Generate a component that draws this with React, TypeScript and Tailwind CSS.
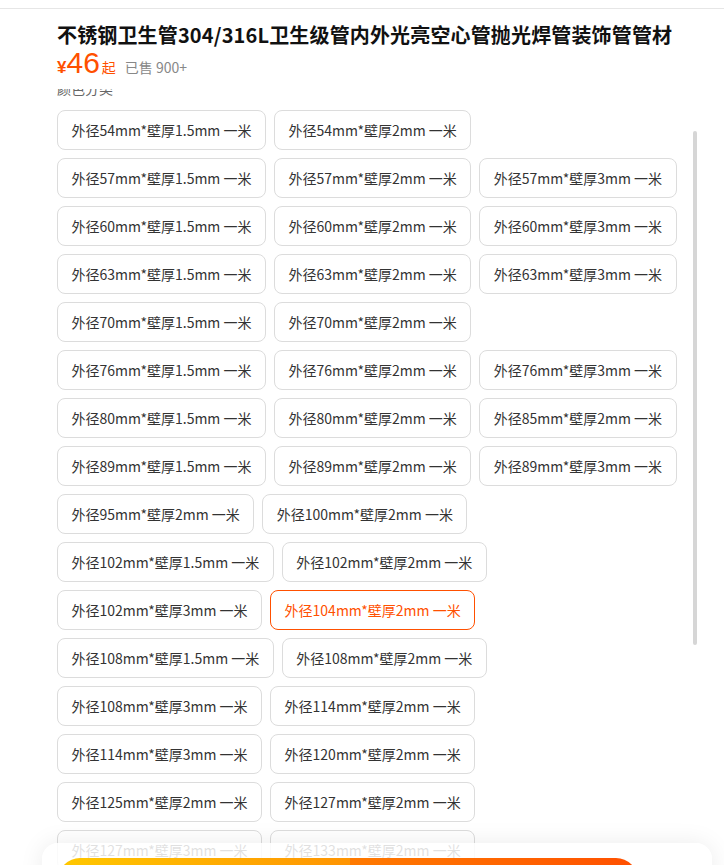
import React from 'react';

const specs: string[][] = [
  ['外径54mm*壁厚1.5mm 一米', '外径54mm*壁厚2mm 一米'],
  ['外径57mm*壁厚1.5mm 一米', '外径57mm*壁厚2mm 一米', '外径57mm*壁厚3mm 一米'],
  ['外径60mm*壁厚1.5mm 一米', '外径60mm*壁厚2mm 一米', '外径60mm*壁厚3mm 一米'],
  ['外径63mm*壁厚1.5mm 一米', '外径63mm*壁厚2mm 一米', '外径63mm*壁厚3mm 一米'],
  ['外径70mm*壁厚1.5mm 一米', '外径70mm*壁厚2mm 一米'],
  ['外径76mm*壁厚1.5mm 一米', '外径76mm*壁厚2mm 一米', '外径76mm*壁厚3mm 一米'],
  ['外径80mm*壁厚1.5mm 一米', '外径80mm*壁厚2mm 一米', '外径85mm*壁厚2mm 一米'],
  ['外径89mm*壁厚1.5mm 一米', '外径89mm*壁厚2mm 一米', '外径89mm*壁厚3mm 一米'],
  ['外径95mm*壁厚2mm 一米', '外径100mm*壁厚2mm 一米'],
  ['外径102mm*壁厚1.5mm 一米', '外径102mm*壁厚2mm 一米'],
  ['外径102mm*壁厚3mm 一米', '外径104mm*壁厚2mm 一米'],
  ['外径108mm*壁厚1.5mm 一米', '外径108mm*壁厚2mm 一米'],
  ['外径108mm*壁厚3mm 一米', '外径114mm*壁厚2mm 一米'],
  ['外径114mm*壁厚3mm 一米', '外径120mm*壁厚2mm 一米'],
  ['外径125mm*壁厚2mm 一米', '外径127mm*壁厚2mm 一米'],
  ['外径127mm*壁厚3mm 一米', '外径133mm*壁厚2mm 一米'],
];

const selected = '外径104mm*壁厚2mm 一米';

const SpecButton: React.FC<{ label: string }> = ({ label }) => {
  const active = label === selected;
  return (
    <button
      className={
        'h-10 rounded-lg border px-[13.5px] text-[14px] leading-5 whitespace-nowrap ' +
        (active ? 'border-[#ff5000] text-[#ff5000]' : 'border-[#dcdcdc] text-[#333]')
      }
    >
      {label}
    </button>
  );
};

const App: React.FC = () => {
  return (
    <div className="relative h-[865px] overflow-hidden bg-white font-['Noto_Sans_CJK_SC',sans-serif]">
      <div className="h-2" />
      <div className="border-t border-[#e6e6e6] pl-[57px] pt-[12px]">
        <h1 className="text-[20px] font-bold leading-[28px] tracking-[0.15px] text-[#111]">
          不锈钢卫生管304/316L卫生级管内外光亮空心管抛光焊管装饰管管材
        </h1>
        <div className="-mt-[1px] flex h-[30px] items-baseline">
          <span className="text-[17px] leading-none font-bold font-['Liberation_Sans',sans-serif] text-[#ff5000]">¥</span>
          <span className="text-[30px] leading-none font-['Liberation_Sans',sans-serif] text-[#ff5000]">46</span>
          <span className="ml-[2px] text-[14px] leading-none text-[#ff5000]">起</span>
          <span className="ml-[9px] text-[14px] leading-none text-[#888]">已售 900+</span>
        </div>
      </div>

      {/* 规格列表（已向下滚动） */}
      <div className="mt-[11px] h-[780px] overflow-hidden pl-[57px]">
        <div className="-mt-[11px] mb-3 text-[14px] leading-5 text-[#666]">颜色分类</div>
        <div className="flex flex-col gap-2">
          {specs.map((row, i) => (
            <div key={i} className="flex gap-2">
              {row.map((s) => (
                <SpecButton key={s} label={s} />
              ))}
            </div>
          ))}
        </div>
      </div>

      {/* 滚动条 */}
      <div className="absolute left-[693px] top-[131px] h-[514px] w-[4px] rounded-full bg-[#d6d6d6]" />

      {/* 底部操作栏 */}
      <div className="absolute left-[42px] top-[843px] flex h-[70px] w-[670px] rounded-t-[16px] bg-white/85 pl-4 pt-[15px] shadow-[0_0_24px_rgba(0,0,0,0.08)]">
        <button className="h-11 w-[292px] rounded-l-full bg-gradient-to-r from-[#ffc800] to-[#ff9402] text-[16px] text-white">
          加入购物车
        </button>
        <button className="h-11 w-[288px] rounded-r-full bg-gradient-to-r from-[#ff7a00] to-[#ff4f00] text-[16px] text-white">
          立即购买
        </button>
      </div>
    </div>
  );
};

export default App;
